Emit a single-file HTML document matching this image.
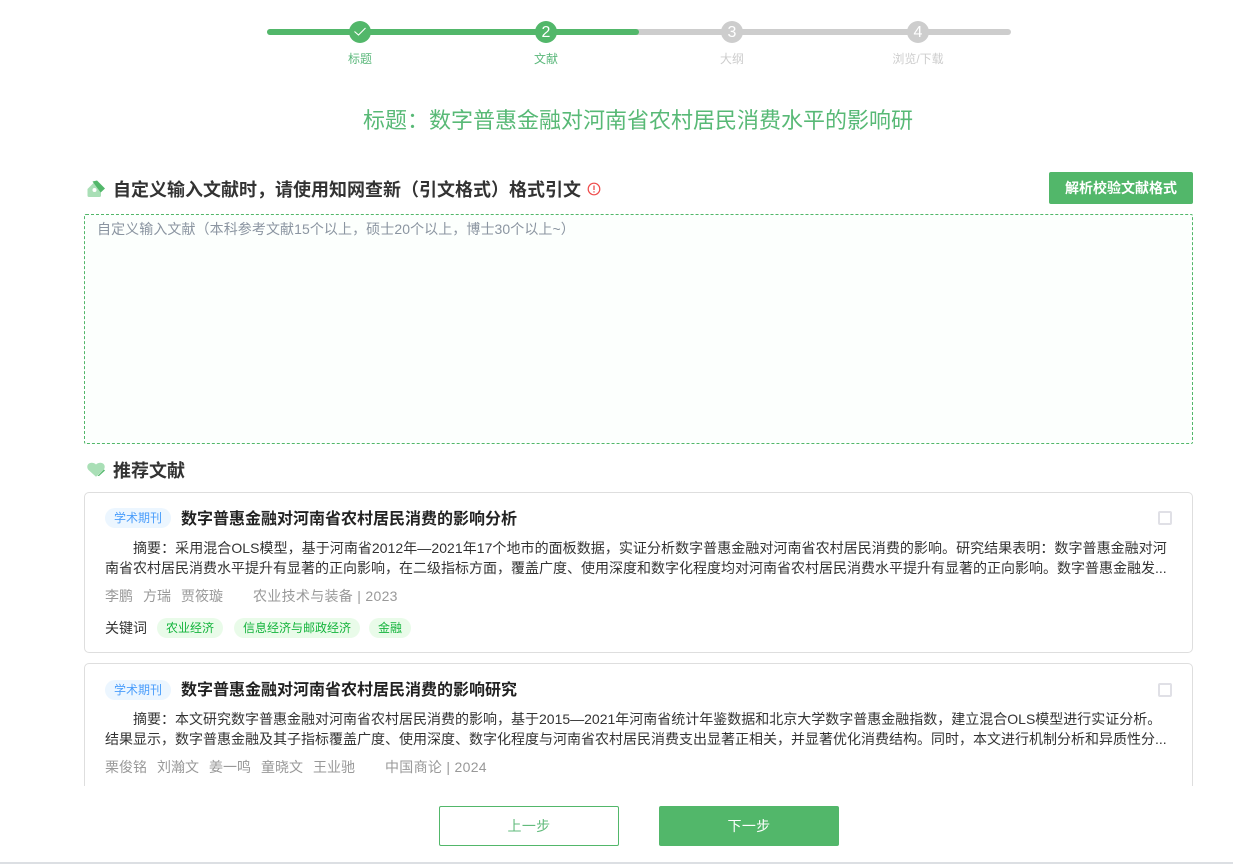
<!DOCTYPE html>
<html lang="zh"><head><meta charset="utf-8"><title>文献</title>
<style>
html,body{margin:0;padding:0;background:#fff}
body{position:relative;width:1233px;height:864px;overflow:hidden;font-family:"Liberation Sans","Noto Sans CJK SC",sans-serif;color:#333}
.a{position:absolute;white-space:nowrap}
.bar{position:absolute;height:6px;top:28.5px;border-radius:3px}
.c{position:absolute;top:21px;width:22px;height:22px;border-radius:50%;color:#fff;font-size:16px;line-height:23px;text-align:center}
.g{background:#52b76a}.k{background:#cdcdcd}
.lb{position:absolute;top:51px;font-size:12px;line-height:16px;text-align:center;width:100px}
h3{position:absolute;margin:0;font-size:18px;line-height:24px;font-weight:bold;color:#333;white-space:nowrap}
.card{position:absolute;left:84px;width:1107px;border:1px solid #dedede;border-radius:5px;background:#fff}
.tag{position:absolute;left:20px;top:15px;width:66px;height:20px;border-radius:10px;background:#ecf6ff;color:#4a9dfb;font-size:12px;line-height:21px;text-align:center}
.t{position:absolute;left:96px;top:15px;font-size:16px;line-height:24px;font-weight:bold;color:#222;white-space:nowrap}
.cb{position:absolute;left:1073px;top:18px;width:10px;height:10px;border:2px solid #e0e0e6;border-radius:2px}
.ab{position:absolute;left:20px;top:45px;width:1070px;font-size:14px;line-height:20px;color:#333}
.ab div{white-space:nowrap;overflow:hidden}
.m{position:absolute;left:20px;top:93px;font-size:14px;line-height:20px;color:#999;white-space:nowrap}
.m span{margin-right:10px}
.m .j{margin-left:20px;margin-right:0;letter-spacing:.3px}
.kw{position:absolute;left:20px;top:125px;font-size:14px;line-height:20px;color:#333}
.kt{position:absolute;top:125px;height:20px;border-radius:10px;background:#e9fbe9;color:#14b43c;font-size:12px;line-height:20px;text-align:center}
.btn{position:absolute;top:806px;width:180px;height:40px;border-radius:2px;box-sizing:border-box;font-size:14px;line-height:40px;text-align:center;letter-spacing:.3px}
</style></head><body>

<div class="bar k" style="left:267px;width:744px"></div>
<div class="bar g" style="left:267px;width:372px"></div>
<div class="c g" style="left:349px"><svg width="22" height="22" viewBox="0 0 22 22" style="display:block"><path d="M5.500 10.500l4 3.500 7-7" fill="none" stroke="#fff" stroke-width="1.100"/></svg></div>
<div class="c g" style="left:535px">2</div>
<div class="c k" style="left:721px">3</div>
<div class="c k" style="left:907px">4</div>
<div class="lb" style="left:310px;color:#5cb87c">标题</div>
<div class="lb" style="left:496px;color:#5cb87c">文献</div>
<div class="lb" style="left:682px;color:#cdcdcd">大纲</div>
<div class="lb" style="left:868px;color:#cdcdcd">浏览/下载</div>

<div class="a" style="left:363px;top:106px;font-size:22px;line-height:30px;color:#58b976">标题：数字普惠金融对河南省农村居民消费水平的影响研</div>

<svg class="a" style="left:86px;top:178px" width="20" height="21" viewBox="0 0 20 21"><path d="M1.500 11L8 4.500 15 12v5.500a1.500 1.500 0 0 1-1.500 1.500H3a1.500 1.500 0 0 1-1.500-1.500z" fill="#a9dfb6"/><path d="M6.500 3.500L11 2.500l8 8-4.300 4z" fill="#52b76a"/><circle cx="8.500" cy="12" r="2" fill="#fff"/></svg>
<h3 style="left:113px;top:178px">自定义输入文献时，请使用知网查新（引文格式）格式引文</h3>
<svg class="a" style="left:587px;top:182px" width="14" height="14" viewBox="0 0 14 14"><circle cx="7" cy="7" r="5.800" fill="none" stroke="#ef4b4b" stroke-width="1.200"/><path d="M7 3.500v4.500M7 9.300v1.200" stroke="#ef4b4b" stroke-width="1.300"/></svg>
<div class="a g" style="left:1049px;top:172px;width:144px;height:32px;border-radius:2px;color:#fff;font-size:14px;font-weight:bold;line-height:33px;text-align:center">解析校验文献格式</div>

<div class="a" style="left:84px;top:214px;width:1107px;height:228px;border:1px dashed #52b76a;border-radius:2px;background:#fcfffd"></div>
<div class="a" style="left:97px;top:220px;font-size:14px;line-height:18px;color:#8b95a1;letter-spacing:.08px">自定义输入文献（本科参考文献15个以上，硕士20个以上，博士30个以上~）</div>

<svg class="a" style="left:86px;top:461px" width="20" height="18" viewBox="0 0 20 18"><path d="M10 15.700L2.500 9C0 6 1.500 1.700 5.500 1.700c2 0 3.500.6 4.500 1.800 1-1.200 2.500-1.800 4.500-1.800 4 0 5.500 4.300 3 7.300z" fill="#a9dfb6"/><path d="M11.500 15l6.500-6.500 1 1-6 5.500z" fill="#52b76a"/></svg>
<h3 style="left:113px;top:459px">推荐文献</h3>

<div class="card" style="top:492px;height:159px">
<div class="tag">学术期刊</div>
<div class="t">数字普惠金融对河南省农村居民消费的影响分析</div>
<div class="cb"></div>
<div class="ab"><div style="text-indent:28px;letter-spacing:.05px">摘要：采用混合OLS模型，基于河南省2012年—2021年17个地市的面板数据，实证分析数字普惠金融对河南省农村居民消费的影响。研究结果表明：数字普惠金融对河</div><div>南省农村居民消费水平提升有显著的正向影响，在二级指标方面，覆盖广度、使用深度和数字化程度均对河南省农村居民消费水平提升有显著的正向影响。数字普惠金融发...</div></div>
<div class="m"><span>李鹏</span><span>方瑞</span><span>贾筱璇</span><span class="j">农业技术与装备 | 2023</span></div>
<div class="kw">关键词</div>
<div class="kt" style="left:72px;width:66px">农业经济</div>
<div class="kt" style="left:149px;width:126px">信息经济与邮政经济</div>
<div class="kt" style="left:284px;width:42px">金融</div>
</div>

<div class="card" style="top:663px;height:160px">
<div class="tag" style="top:16px">学术期刊</div>
<div class="t">数字普惠金融对河南省农村居民消费的影响研究</div>
<div class="cb" style="top:19px"></div>
<div class="ab"><div style="text-indent:28px">摘要：本文研究数字普惠金融对河南省农村居民消费的影响，基于2015—2021年河南省统计年鉴数据和北京大学数字普惠金融指数，建立混合OLS模型进行实证分析。</div><div>结果显示，数字普惠金融及其子指标覆盖广度、使用深度、数字化程度与河南省农村居民消费支出显著正相关，并显著优化消费结构。同时，本文进行机制分析和异质性分...</div></div>
<div class="m"><span>栗俊铭</span><span>刘瀚文</span><span>姜一鸣</span><span>童晓文</span><span>王业驰</span><span class="j">中国商论 | 2024</span></div>
</div>

<div class="a" style="left:0;top:786px;width:1233px;height:76px;background:#fff"></div>
<div class="btn" style="left:439px;border:1px solid #52b76a;color:#62bb7c;background:#fff;line-height:38px">上一步</div>
<div class="btn g" style="left:659px;color:#fff">下一步</div>
<div class="a" style="left:0;top:862px;width:1233px;height:2px;background:#dcdfe3"></div>
</body></html>
